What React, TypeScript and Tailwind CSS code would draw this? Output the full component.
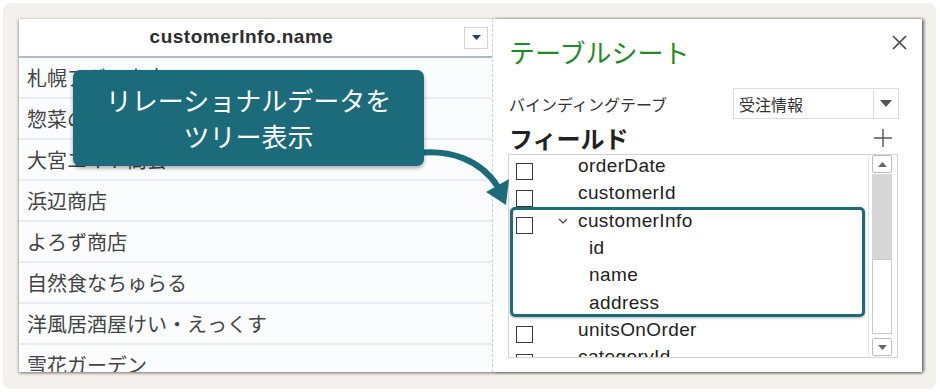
const jp = "font-['Noto_Sans_CJK_JP',sans-serif]";
const latin = "font-['Liberation_Sans','Noto_Sans_CJK_JP',sans-serif]";

const customers = [
  '札幌アグリ商店',
  '惣菜のおかず屋',
  '大宮エイト商会',
  '浜辺商店',
  'よろず商店',
  '自然食なちゅらる',
  '洋風居酒屋けい・えっくす',
  '雪花ガーデン',
];

const teal = '#1b6b7b';

export default function App() {
  return (
    <div className="h-[392px] w-[940px] bg-white p-[3px]">
      <div className="h-[386px] w-[933px] rounded-[8px] bg-[#f4f0eb] pl-[16px] pt-[16px]">
        <div className="relative flex h-[353px] w-[903px] shadow-[0_1px_3px_rgba(0,0,0,0.55)]">
          <Grid />
          <Panel />
          <Arrow />
          <Callout />
        </div>
      </div>
    </div>
  );
}

function Grid() {
  return (
    <div className="flex h-full w-[474px] shrink-0 flex-col overflow-hidden border-r border-dashed border-[#d3d6dc] bg-[#fbfcfe]">
      <div className="flex h-[39px] shrink-0 items-center border-b-2 border-[#a9b8cc] bg-white">
        <div className={`flex-1 text-center text-[19px] font-bold tracking-[0.5px] text-[#2e2e2e] ${latin}`}>
          customerInfo.name
        </div>
        <div className="mr-[4px] flex h-[22px] w-[24px] items-center justify-center border border-[#d4d4d4] bg-white">
          <svg width="9" height="5" viewBox="0 0 9 5">
            <polygon points="0,0 9,0 4.5,5" fill="#2b3a67" />
          </svg>
        </div>
      </div>
      {customers.map((c) => (
        <div
          key={c}
          className={`flex h-[41px] shrink-0 items-center border-b-2 border-[#e9ecf2] pl-[8px] text-[20px] text-[#444] ${jp}`}
        >
          {c}
        </div>
      ))}
    </div>
  );
}

function Panel() {
  return (
    <div className="flex h-full flex-1 flex-col overflow-hidden bg-white pl-[16px] shadow-[2px_0_3px_rgba(0,0,0,0.45)]">
      <div className="mt-[18px] flex items-start justify-between pr-[15px]">
        <div className={`h-[30px] text-[26px] leading-[30px] text-[#1f8b24] ${jp}`}>テーブルシート</div>
        <svg width="15" height="15" viewBox="0 0 15 15" className="-mt-[2px]">
          <path d="M1 1 L14 14 M14 1 L1 14" stroke="#444" strokeWidth="1.6" />
        </svg>
      </div>

      <div className="mt-[21px] flex h-[31px] items-center justify-between pr-[23px]">
        <span className={`text-[16px] text-[#333] ${jp}`}>バインディングテーブ</span>
        <div className="flex h-[31px] w-[166px] border border-[#dcdcdc]">
          <span className={`flex flex-1 items-center pl-[5px] text-[16px] text-[#333] ${jp}`}>受注情報</span>
          <div className="flex w-[25px] items-center justify-center border-l border-[#dcdcdc]">
            <svg width="12" height="7" viewBox="0 0 12 7">
              <polygon points="0,0 12,0 6,7" fill="#555" />
            </svg>
          </div>
        </div>
      </div>

      <div className="mt-[3px] flex h-[32px] items-center justify-between pr-[30px]">
        <span className={`text-[24px] font-bold text-[#222] ${jp}`}>フィールド</span>
        <svg width="18" height="18" viewBox="0 0 18 18">
          <path d="M9 0 V18 M0 9 H18" stroke="#555" strokeWidth="1.4" />
        </svg>
      </div>

      <FieldList />
    </div>
  );
}

function FieldList() {
  return (
    <div className="-ml-[1px] flex h-[204px] w-[390px] shrink-0 overflow-hidden border border-[#d4d4d4]">
      <div className={`flex-1 overflow-hidden ${latin}`}>
        <FieldRow label="orderDate" />
        <FieldRow label="customerId" />
        <div className="relative">
          <FieldRow label="customerInfo" expanded />
          <ChildRow label="id" />
          <ChildRow label="name" />
          <ChildRow label="address" />
          <div
            className="pointer-events-none absolute -top-[3px] bottom-[2px] left-[1px] right-[3px] rounded-[5px] border-[3px] shadow-[0_1px_3px_rgba(0,0,0,0.3)]"
            style={{ borderColor: teal }}
          />
        </div>
        <FieldRow label="unitsOnOrder" />
        <FieldRow label="categoryId" />
      </div>
      <div className="flex w-[29px] flex-col border-l border-[#e4e4e4] pl-[3px]">
        <ScrollButton up />
        <div className="h-[85px] w-[20px] bg-[#d7d7d7]" />
        <div className="h-[75px] w-[20px] border border-[#c8c8c8] bg-white" />
        <div className="flex-1" />
        <ScrollButton />
      </div>
    </div>
  );
}

function FieldRow({ label, expanded }: { label: string; expanded?: boolean }) {
  return (
    <div className="flex h-[27.3px] items-center">
      <div className="mt-[5px] ml-[7px] h-[17px] w-[17px] shrink-0 border border-[#3a3a3a]" />
      <div className="mb-[4px] flex w-[45px] shrink-0 items-center pl-[25px]">
        {expanded && (
          <svg width="10" height="6" viewBox="0 0 10 6">
            <polyline points="1,1 5,5 9,1" fill="none" stroke="#555" strokeWidth="1.3" />
          </svg>
        )}
      </div>
      <span className="mb-[6px] text-[19px] leading-none tracking-[0.4px] text-[#222]">{label}</span>
    </div>
  );
}

function ChildRow({ label }: { label: string }) {
  return (
    <div className="flex h-[27.3px] items-center pl-[80px]">
      <span className="mb-[6px] text-[19px] leading-none tracking-[0.4px] text-[#222]">{label}</span>
    </div>
  );
}

function ScrollButton({ up }: { up?: boolean }) {
  return (
    <div className="mb-[1px] flex h-[18px] w-[20px] shrink-0 items-center justify-center rounded-[2px] border border-[#bdbdbd] bg-white">
      <svg width="9" height="5" viewBox="0 0 9 5">
        <polygon points={up ? '0,5 9,5 4.5,0' : '0,0 9,0 4.5,5'} fill="#666" />
      </svg>
    </div>
  );
}

function Arrow() {
  return (
    <svg
      className="pointer-events-none absolute left-0 top-0"
      width="903"
      height="353"
      viewBox="0 0 903 353"
    >
      <path d="M398 134 C431 130 462 141 479 168" fill="none" stroke={teal} strokeWidth="6" />
      <polygon points="467,173 490,160 487,186" fill={teal} />
    </svg>
  );
}

function Callout() {
  return (
    <div
      className={`absolute left-[54px] top-[51px] flex h-[96px] w-[351px] flex-col items-center justify-center rounded-[7px] text-[26px] leading-[36px] text-white shadow-[0_2px_4px_rgba(0,0,0,0.35)] ${jp}`}
      style={{ backgroundColor: teal }}
    >
      <span>リレーショナルデータを</span>
      <span>ツリー表示</span>
    </div>
  );
}
